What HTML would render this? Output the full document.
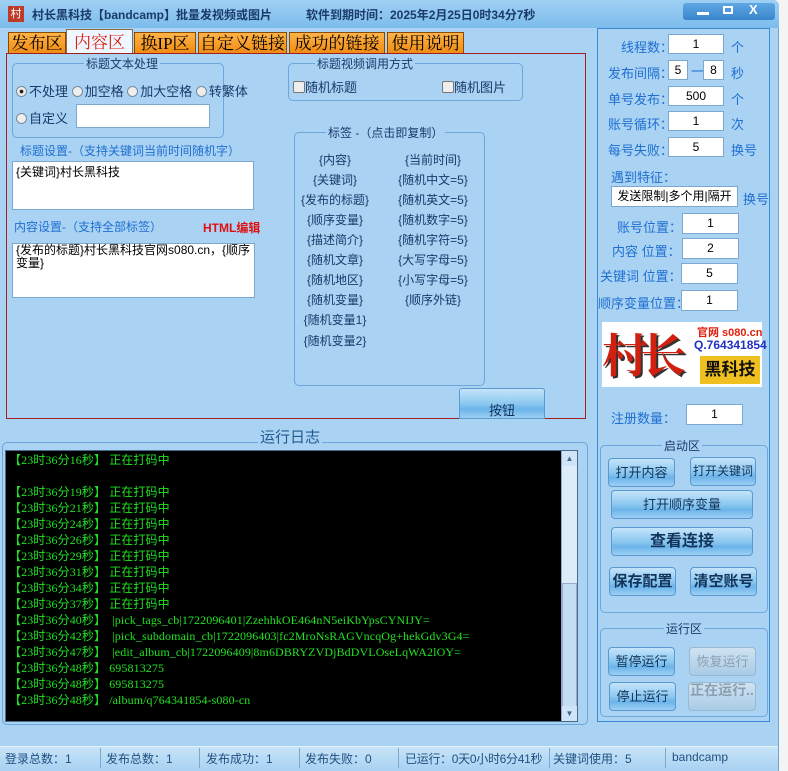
<!DOCTYPE html>
<html><head><meta charset="utf-8"><style>
*{box-sizing:border-box;margin:0;padding:0}
body{width:788px;height:771px;position:relative;overflow:hidden;background:#f4f4f4;font-family:"Liberation Sans","Noto Sans CJK SC",sans-serif;font-size:12px;color:#000}
.a{position:absolute;white-space:nowrap}
#win{position:absolute;left:0;top:0;width:779px;height:771px;background:#a9d2f3;border-right:1px solid #6aa8d8;border-radius:0 6px 0 0}
#tb{position:absolute;left:0;top:0;width:779px;height:28px;background:linear-gradient(#9fd0f4,#7cbcec);border-radius:0 6px 0 0}
.tab{position:absolute;top:32px;height:22px;background:linear-gradient(#ffb347,#f08a10);border:1px solid #8a4a00;border-bottom:none;font-size:17px;font-family:"Liberation Serif","Noto Serif CJK SC",serif;line-height:21px;text-align:center;color:#000}
.grp{position:absolute;border:1px solid #6ca6dc;border-radius:5px}
.gt{position:absolute;background:#a9d2f3;padding:0 2px;color:#1a3a6a;font-size:12px;white-space:nowrap}
.in{position:absolute;background:#fff;border:1px solid #7aa8d0;text-align:center;font-size:12px;line-height:18px}
.lb{position:absolute;color:#1f6fd0;font-size:13px;white-space:nowrap}
.rd{display:inline-block;width:11px;height:11px;border-radius:50%;border:1px solid #7a8a9a;background:#eee;vertical-align:-1px;margin-right:2px}
.btn{position:absolute;border:1px solid #5a9ad0;border-radius:4px;background:linear-gradient(#c4e4fa 0%,#8cc8f0 50%,#6cb4ea 70%,#9cd0f4 100%);text-align:center;color:#12335a;font-size:13px;white-space:nowrap;overflow:hidden}
.dis{color:#8aa0b0;background:linear-gradient(#cfe3f2,#a9cbe6);border-color:#9ab8d0}
.tag{position:absolute;color:#1a3a6a;font-size:12px;white-space:nowrap;text-align:center;width:90px}
#log div{height:16px;line-height:16px;white-space:nowrap;color:#22e022;font-family:"Liberation Serif","Noto Sans CJK SC",serif;font-size:12px;letter-spacing:0.1px}
.sb{position:absolute;top:750px;color:#1f4f80;font-size:12px;white-space:nowrap}
.sep{position:absolute;top:748px;width:1px;height:20px;background:#7aa8d0}
</style></head><body>
<div id="win">
<div id="tb">
 <div class="a" style="left:8px;top:6px;width:16px;height:16px;background:#c03a2a;color:#fff;font-size:11px;text-align:center;line-height:16px">村</div>
 <div class="a" style="left:32px;top:6px;color:#1a3a6a;font-size:12px;font-weight:bold">村长黑科技【bandcamp】批量发视频或图片</div>
 <div class="a" style="left:306px;top:6px;color:#1a3a6a;font-size:12px;font-weight:bold">软件到期时间：2025年2月25日0时34分7秒</div>
 <div class="a" style="left:683px;top:3px;width:92px;height:17px;background:linear-gradient(#5fa8e4,#3a84cc);border-radius:3px"></div>
 <div class="a" style="left:697px;top:12px;width:12px;height:3px;background:#fff"></div>
 <div class="a" style="left:723px;top:6px;width:10px;height:8px;border:2px solid #fff"></div>
 <div class="a" style="left:749px;top:2px;color:#fff;font-weight:bold;font-size:13px">X</div>
</div>
<div class="tab" style="left:8px;width:58px">发布区</div>
<div class="tab" style="left:66px;width:67px;top:29px;height:25px;background:#eef6ff;color:#e02010;line-height:25px;border-color:#8a6a40">内容区</div>
<div class="tab" style="left:134px;width:62px">换IP区</div>
<div class="tab" style="left:198px;width:89px">自定义链接</div>
<div class="tab" style="left:289px;width:96px">成功的链接</div>
<div class="tab" style="left:387px;width:77px">使用说明</div>
<div class="a" style="left:6px;top:53px;width:580px;height:366px;border:1px solid #a02020"></div>

<div class="grp" style="left:12px;top:63px;width:212px;height:75px"></div>
<div class="gt" style="left:84px;top:55px">标题文本处理</div>
<div class="a" style="left:16px;top:81px;font-size:13px;color:#1a3a6a"><span class="rd" style="background:radial-gradient(#222 25%,#eee 35%)"></span>不处理 <span class="rd"></span>加空格 <span class="rd"></span>加大空格 <span class="rd"></span>转繁体</div>
<div class="a" style="left:16px;top:108px;font-size:13px;color:#1a3a6a"><span class="rd"></span>自定义</div>
<div class="in" style="left:76px;top:104px;width:134px;height:24px"></div>
<div class="lb" style="left:20px;top:142px;font-size:12px">标题设置-（支持关键词当前时间随机字）</div>
<div class="in" style="left:12px;top:161px;width:242px;height:49px;text-align:left;padding:1px 3px">{关键词}村长黑科技</div>
<div class="lb" style="left:14px;top:218px;font-size:12px">内容设置-（支持全部标签）</div>
<div class="a" style="left:203px;top:219px;color:#e01010;font-size:12px;font-weight:bold">HTML编辑</div>
<div class="in" style="left:12px;top:243px;width:243px;height:55px;text-align:left;padding:0 3px;line-height:13px;white-space:normal">{发布的标题}村长黑科技官网s080.cn，{顺序变量}</div>

<div class="grp" style="left:288px;top:63px;width:235px;height:38px"></div>
<div class="gt" style="left:315px;top:55px">标题视频调用方式</div>
<div class="a" style="left:293px;top:77px;font-size:13px;color:#1a3a6a"><span style="display:inline-block;width:12px;height:12px;border:1px solid #777;background:#eee;border-radius:2px;vertical-align:-1px"></span>随机标题</div>
<div class="a" style="left:442px;top:77px;font-size:13px;color:#1a3a6a"><span style="display:inline-block;width:12px;height:12px;border:1px solid #777;background:#eee;border-radius:2px;vertical-align:-1px"></span>随机图片</div>

<div class="grp" style="left:294px;top:132px;width:191px;height:254px"></div>
<div class="gt" style="left:326px;top:124px">标签 -（点击即复制）</div>
<div class="tag" style="left:290px;top:151px">{内容}</div>
<div class="tag" style="left:290px;top:171px">{关键词}</div>
<div class="tag" style="left:290px;top:191px">{发布的标题}</div>
<div class="tag" style="left:290px;top:211px">{顺序变量}</div>
<div class="tag" style="left:290px;top:231px">{描述简介}</div>
<div class="tag" style="left:290px;top:251px">{随机文章}</div>
<div class="tag" style="left:290px;top:271px">{随机地区}</div>
<div class="tag" style="left:290px;top:291px">{随机变量}</div>
<div class="tag" style="left:290px;top:311px">{随机变量1}</div>
<div class="tag" style="left:290px;top:332px">{随机变量2}</div>
<div class="tag" style="left:388px;top:151px">{当前时间}</div>
<div class="tag" style="left:388px;top:171px">{随机中文=5}</div>
<div class="tag" style="left:388px;top:191px">{随机英文=5}</div>
<div class="tag" style="left:388px;top:211px">{随机数字=5}</div>
<div class="tag" style="left:388px;top:231px">{随机字符=5}</div>
<div class="tag" style="left:388px;top:251px">{大写字母=5}</div>
<div class="tag" style="left:388px;top:271px">{小写字母=5}</div>
<div class="tag" style="left:388px;top:291px">{顺序外链}</div>
<div class="btn" style="left:459px;top:388px;width:86px;height:31px;line-height:44px;border-radius:3px 3px 0 0">按钮</div>

<div class="grp" style="left:2px;top:442px;width:586px;height:283px"></div>
<div class="gt" style="left:258px;top:426px;font-size:15px;color:#1f5a90">运行日志</div>
<div id="log" class="a" style="left:5px;top:450px;width:573px;height:272px;background:#000;padding:1px 0 0 3px;border:1px solid #4a6a8a">
<div>【23时36分16秒】 正在打码中</div><div></div>
<div>【23时36分19秒】 正在打码中</div>
<div>【23时36分21秒】 正在打码中</div>
<div>【23时36分24秒】 正在打码中</div>
<div>【23时36分26秒】 正在打码中</div>
<div>【23时36分29秒】 正在打码中</div>
<div>【23时36分31秒】 正在打码中</div>
<div>【23时36分34秒】 正在打码中</div>
<div>【23时36分37秒】 正在打码中</div>
<div>【23时36分40秒】 &nbsp;|pick_tags_cb|1722096401|ZzehhkOE464nN5eiKbYpsCYNIJY=</div>
<div>【23时36分42秒】 &nbsp;|pick_subdomain_cb|1722096403|fc2MroNsRAGVncqOg+hekGdv3G4=</div>
<div>【23时36分47秒】 &nbsp;|edit_album_cb|1722096409|8m6DBRYZVDjBdDVLOseLqWA2lOY=</div>
<div>【23时36分48秒】 695813275</div>
<div>【23时36分48秒】 695813275</div>
<div>【23时36分48秒】 /album/q764341854-s080-cn</div>
</div>
<div class="a" style="left:561px;top:451px;width:16px;height:270px;background:#dcecf8;border-left:1px solid #9ac"></div>
<div class="a" style="left:562px;top:451px;width:15px;height:15px;background:#cfe4f6;color:#468;font-size:8px;text-align:center;line-height:15px">▲</div>
<div class="a" style="left:562px;top:583px;width:15px;height:124px;background:#c4ddf2;border:1px solid #9ac"></div>
<div class="a" style="left:562px;top:706px;width:15px;height:15px;background:#cfe4f6;color:#468;font-size:8px;text-align:center;line-height:15px">▼</div>

<div class="a" style="left:597px;top:28px;width:173px;height:694px;border:1px solid #3a8ad8"></div>
<div class="lb" style="left:621px;top:37px">线程数：</div><div class="in" style="left:668px;top:34px;width:56px;height:20px">1</div><div class="lb" style="left:731px;top:37px">个</div>
<div class="lb" style="left:608px;top:63px">发布间隔：</div><div class="in" style="left:668px;top:60px;width:20px;height:20px">5</div><div class="lb" style="left:691px;top:61px">一</div><div class="in" style="left:703px;top:60px;width:21px;height:20px">8</div><div class="lb" style="left:731px;top:63px">秒</div>
<div class="lb" style="left:608px;top:89px">单号发布：</div><div class="in" style="left:668px;top:86px;width:56px;height:20px">500</div><div class="lb" style="left:731px;top:89px">个</div>
<div class="lb" style="left:608px;top:114px">账号循环：</div><div class="in" style="left:668px;top:111px;width:56px;height:20px">1</div><div class="lb" style="left:731px;top:114px">次</div>
<div class="lb" style="left:608px;top:140px">每号失败：</div><div class="in" style="left:668px;top:137px;width:56px;height:20px">5</div><div class="lb" style="left:731px;top:140px">换号</div>
<div class="lb" style="left:611px;top:167px">遇到特征：</div>
<div class="in" style="left:611px;top:186px;width:127px;height:21px;color:#000;font-size:12px">发送限制|多个用|隔开</div><div class="lb" style="left:743px;top:189px">换号</div>
<div class="lb" style="left:617px;top:217px">账号位置：</div><div class="in" style="left:682px;top:213px;width:57px;height:21px">1</div>
<div class="lb" style="left:612px;top:241px">内容 位置：</div><div class="in" style="left:682px;top:238px;width:57px;height:21px">2</div>
<div class="lb" style="left:600px;top:266px">关键词 位置：</div><div class="in" style="left:681px;top:263px;width:57px;height:21px">5</div>
<div class="lb" style="left:598px;top:293px">顺序变量位置：</div><div class="in" style="left:681px;top:290px;width:57px;height:21px">1</div>
<div class="a" style="left:602px;top:322px;width:160px;height:65px;background:#fff"></div>
<div class="a" style="left:602px;top:320px;font-size:46px;font-weight:bold;color:#d02010;font-family:'Liberation Serif','Noto Serif CJK SC',serif;letter-spacing:-8px;text-shadow:2px 2px 0 #333">村长</div>
<div class="a" style="left:697px;top:324px;font-size:11px;font-weight:bold;color:#e02010">官网 s080.cn</div>
<div class="a" style="left:694px;top:338px;font-size:12px;font-weight:bold;color:#2030c0">Q.764341854</div>
<div class="a" style="left:700px;top:356px;width:60px;height:28px;background:#f0c020;font-size:17px;font-weight:bold;color:#111;text-align:center;line-height:28px">黑科技</div>
<div class="lb" style="left:611px;top:408px">注册数量：</div><div class="in" style="left:686px;top:404px;width:57px;height:21px">1</div>

<div class="grp" style="left:600px;top:445px;width:168px;height:168px"></div>
<div class="gt" style="left:662px;top:437px">启动区</div>
<div class="btn" style="left:608px;top:458px;width:67px;height:29px;line-height:27px">打开内容</div>
<div class="btn" style="left:690px;top:457px;width:66px;height:29px;line-height:27px;font-size:12px">打开关键词</div>
<div class="btn" style="left:611px;top:490px;width:142px;height:29px;line-height:27px">打开顺序变量</div>
<div class="btn" style="left:611px;top:527px;width:142px;height:29px;line-height:27px;font-size:16px;font-weight:bold">查看连接</div>
<div class="btn" style="left:609px;top:567px;width:67px;height:29px;line-height:27px;font-size:15px;font-weight:bold">保存配置</div>
<div class="btn" style="left:690px;top:567px;width:67px;height:29px;line-height:27px;font-size:15px;font-weight:bold">清空账号</div>

<div class="grp" style="left:600px;top:628px;width:168px;height:89px"></div>
<div class="gt" style="left:664px;top:620px">运行区</div>
<div class="btn" style="left:608px;top:647px;width:67px;height:29px;line-height:27px">暂停运行</div>
<div class="btn dis" style="left:689px;top:647px;width:67px;height:29px;line-height:27px">恢复运行</div>
<div class="btn" style="left:609px;top:682px;width:67px;height:29px;line-height:27px">停止运行</div>
<div class="btn dis" style="left:688px;top:682px;width:68px;height:29px;line-height:14px;font-size:14px;font-weight:bold;white-space:normal">正在运行..</div>

<div class="a" style="left:0;top:746px;width:778px;height:24px;background:linear-gradient(#c8e4f8,#a8d2f2);border-top:1px solid #e4f2fc"></div>
<div class="sb" style="left:5px">登录总数：1</div><div class="sep" style="left:100px"></div>
<div class="sb" style="left:106px">发布总数：1</div><div class="sep" style="left:199px"></div>
<div class="sb" style="left:206px">发布成功：1</div><div class="sep" style="left:299px"></div>
<div class="sb" style="left:305px">发布失败：0</div><div class="sep" style="left:398px"></div>
<div class="sb" style="left:405px;letter-spacing:-0.3px">已运行：0天0小时6分41秒</div><div class="sep" style="left:549px"></div>
<div class="sb" style="left:553px">关键词使用：5</div><div class="sep" style="left:665px"></div>
<div class="sb" style="left:672px">bandcamp</div>
</div>
</body></html>
